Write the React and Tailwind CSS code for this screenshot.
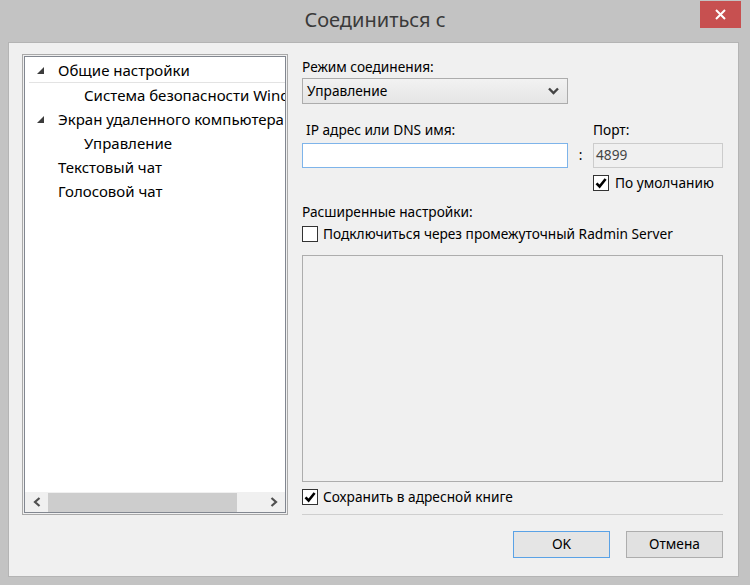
import React from 'react';

const Check = ({ checked }) => (
  <span className="w-[16px] h-[16px] border border-[#333] bg-white flex items-center justify-center shrink-0">
    {checked && (
      <svg width="12" height="12" viewBox="0 0 12 12">
        <path d="M1.5 6.3 L4.6 9.5 L10.6 2" fill="none" stroke="#000" strokeWidth="2.6" />
      </svg>
    )}
  </span>
);

const Triangle = () => (
  <svg width="7" height="7" viewBox="0 0 7 7" className="shrink-0">
    <polygon points="7,0 7,7 0,7" fill="#3c3c3c" />
  </svg>
);

const treeItems = [
  { label: 'Общие настройки', level: 0, open: true, hover: true },
  { label: 'Система безопасности Windows', level: 1 },
  { label: 'Экран удаленного компьютера', level: 0, open: true },
  { label: 'Управление', level: 1 },
  { label: 'Текстовый чат', level: 0 },
  { label: 'Голосовой чат', level: 0 },
];

export default function App() {
  return (
    <div className="w-[750px] h-[585px] bg-[#c3c3c3] flex flex-col font-['Noto_Sans','Liberation_Sans',sans-serif] text-[13.7px] text-black overflow-hidden">
      {/* title bar */}
      <div className="relative h-[42px] shrink-0 flex items-center justify-center">
        <span className="text-[20px] text-[#3a3a3a] mt-[-2px]">Соединиться с</span>
        <button className="absolute top-[1px] right-[9px] w-[41px] h-[27px] bg-[#c75050] flex items-center justify-center">
          <svg width="11" height="11" viewBox="0 0 11 11">
            <path d="M1 1 L10 10 M10 1 L1 10" stroke="#fff" strokeWidth="2" />
          </svg>
        </button>
      </div>

      {/* client area */}
      <div className="ml-[8px] w-[731px] h-[535px] bg-[#f0f0f0] border border-[#b4b4b4] flex pt-[11px] pl-[13px]">
        {/* tree */}
        <div className="w-[266px] h-[461px] border border-[#a9a9a9] p-[1px] bg-[#f0f0f0] shrink-0">
          <div className="w-full h-full border border-[#828790] bg-white flex flex-col">
            <div className="flex-1 pt-[2px] overflow-hidden text-[15px]">
              {treeItems.map((it) => (
                <div
                  key={it.label}
                  className={`h-[24px] flex items-center whitespace-nowrap ${it.hover ? 'border-b border-[#e3e3e3] ml-[4px] pl-[8px]' : 'pl-[12px]'}`}
                >
                  <span className="w-[21px] shrink-0 flex items-center">{it.open && it.level === 0 && <Triangle />}</span>
                  {it.level === 1 && <span className="w-[26px] shrink-0" />}
                  <span className="shrink-0">{it.label}</span>
                </div>
              ))}
            </div>
            <div className="h-[20px] bg-[#f0f0f0] flex items-center shrink-0">
              <div className="w-[23px] flex items-center justify-center">
                <svg width="8" height="10" viewBox="0 0 8 10">
                  <path d="M6.5 1 L2 5 L6.5 9" fill="none" stroke="#505050" strokeWidth="2.2" />
                </svg>
              </div>
              <div className="w-[189px] h-[19px] bg-[#cdcdcd]" />
              <div className="flex-1" />
              <div className="w-[23px] flex items-center justify-center">
                <svg width="8" height="10" viewBox="0 0 8 10">
                  <path d="M1.5 1 L6 5 L1.5 9" fill="none" stroke="#505050" strokeWidth="2.2" />
                </svg>
              </div>
            </div>
          </div>
        </div>

        {/* right column */}
        <div className="w-[421px] ml-[14px] flex flex-col whitespace-nowrap">
          <div className="leading-[20px] mt-[3px]">Режим соединения:</div>
          <div className="mt-[1px] w-[266px] h-[26px] border border-[#acacac] bg-gradient-to-b from-[#f2f2f2] to-[#e5e5e5] flex items-center justify-between pl-[4px] pr-[8px]">
            <span>Управление</span>
            <svg width="11" height="8" viewBox="0 0 11 8">
              <path d="M1 1.5 L5.5 6 L10 1.5" fill="none" stroke="#444" strokeWidth="2.4" />
            </svg>
          </div>

          <div className="mt-[16px] flex leading-[20px]">
            <span className="w-[291px] pl-[4px]">IP адрес или DNS имя:</span>
            <span>Порт:</span>
          </div>
          <div className="mt-[3px] flex items-center h-[25px]">
            <div className="w-[266px] h-[25px] border border-[#7eb4ea] bg-white" />
            <span className="w-[25px] text-center">:</span>
            <div className="w-[130px] h-[25px] border border-[#cccccc] bg-[#f0f0f0] flex items-center pl-[2px] text-[#444]">4899</div>
          </div>
          <div className="mt-[5px] ml-[291px] h-[20px] flex items-center gap-[6px]">
            <Check checked />
            <span>По умолчанию</span>
          </div>

          <div className="mt-[9px] leading-[20px]">Расширенные настройки:</div>
          <div className="mt-[2px] h-[20px] flex items-center gap-[5px]">
            <Check />
            <span>Подключиться через промежуточный Radmin Server</span>
          </div>

          <div className="mt-[11px] h-[227px] border border-[#adadad] bg-[#f0f0f0]" />

          <div className="mt-[5px] h-[20px] flex items-center gap-[5px]">
            <Check checked />
            <span>Сохранить в адресной книге</span>
          </div>
          <div className="mt-[7px] border-t border-[#cfcfcf]" />

          <div className="mt-[16px] flex justify-end gap-[16px]">
            <button className="w-[97px] h-[27px] border border-[#5aa2e6] bg-[#e5e5e5]">OK</button>
            <button className="w-[97px] h-[27px] border border-[#adadad] bg-[#e1e1e1]">Отмена</button>
          </div>
        </div>
      </div>
    </div>
  );
}
